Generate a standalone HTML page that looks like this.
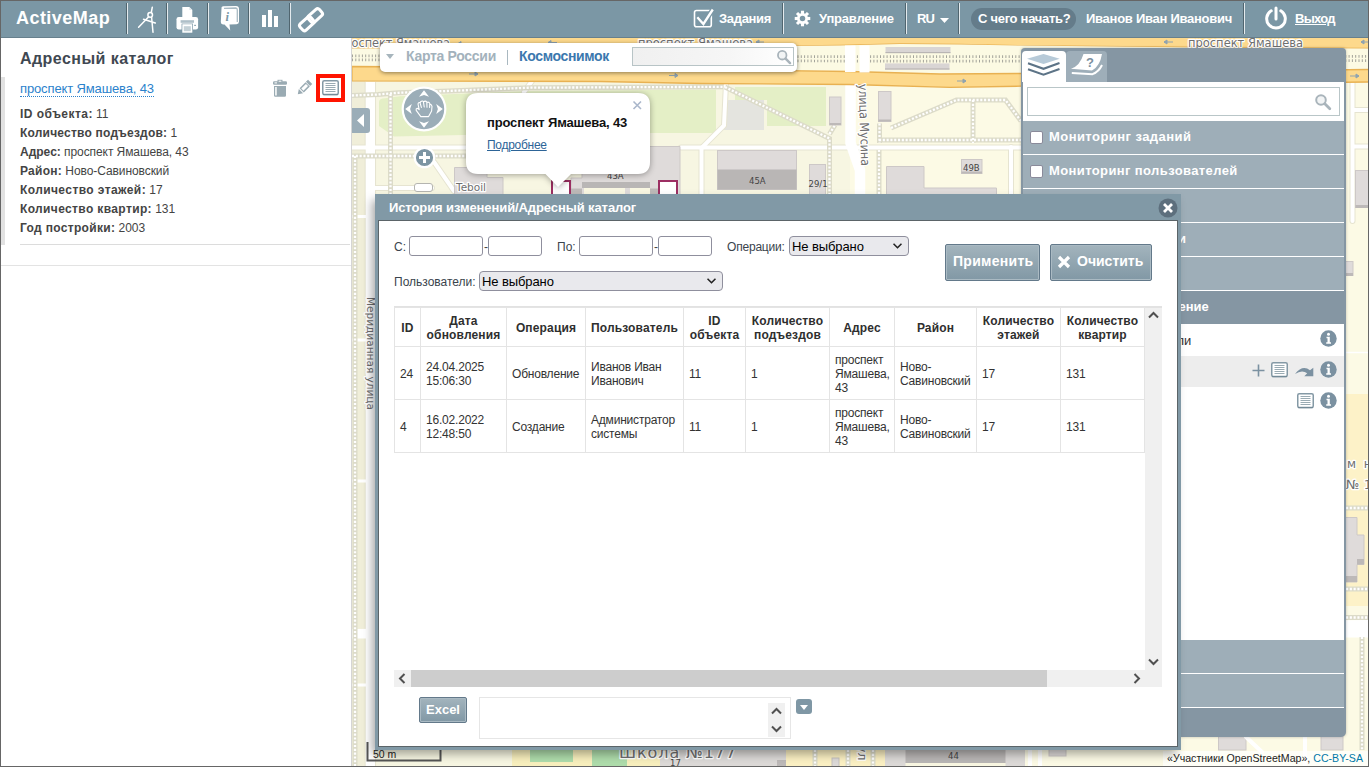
<!DOCTYPE html>
<html lang="ru">
<head>
<meta charset="utf-8">
<title>ActiveMap</title>
<style>
*{box-sizing:border-box;margin:0;padding:0}
html,body{width:1369px;height:767px;overflow:hidden;background:#fff}
body{font-family:"Liberation Sans",sans-serif;font-size:12px;color:#444;position:relative}
.abs{position:absolute}
.t{position:absolute;white-space:nowrap;line-height:1}
.b{font-weight:bold}
#frame{position:absolute;left:0;top:0;width:1369px;height:767px;border:1px solid #666;z-index:100;pointer-events:none}
/* top bar */
#topbar{position:absolute;left:1px;top:1px;width:1367px;height:37px;background:#7b97a5;border-bottom:1px solid #67808d}
#topbar .sep{position:absolute;top:2px;height:31px;width:2px;border-left:1px solid #50656f;border-right:1px solid #e3eaee}
#topbar .t{color:#fff;font-weight:bold;font-size:13px}
/* left panel */
#left{position:absolute;left:1px;top:38px;width:351px;height:728px;background:#fff;border-right:1px solid #d5d5d5}
/* map */
#map{position:absolute;left:352px;top:38px;width:1016px;height:728px;background:#f8f6e2;overflow:hidden}
</style>
<style>
#dlg{position:absolute;left:375px;top:194px;width:806px;height:556px;background:#8199a6;box-shadow:-4px 5px 9px -1px rgba(0,0,0,.34)}
#dlg .inner{position:absolute;left:3px;top:26px;width:800px;height:527px;background:#fff;border:1px solid #5b6468}
#dlg .inp{position:absolute;height:20px;background:#fff;border:1px solid #8f8f9d;border-radius:3px}
#dlg .sel{position:absolute;height:20px;background:#e9e9ed;border:1px solid #8f8f9d;border-radius:4px}
#dlg .sel span{position:absolute;left:2px;top:2px;font-size:13px;color:#000;line-height:15px;white-space:nowrap;letter-spacing:-.1px}
#dlg .btn{position:absolute;border:1px solid #63798a;background:linear-gradient(#a3b4bd,#8198a5);box-shadow:inset 0 0 0 1px #aabac3;border-radius:2px}
#dlg .btn .t{color:#fff;font-weight:bold}
#tbl{position:absolute;left:19px;top:113px;border-collapse:collapse;table-layout:fixed;width:751px;font-size:12px;line-height:14px;color:#333}
#tbl td,#tbl th{border:1px solid #e4e4e4;padding:1px 0 0 5px;vertical-align:middle;text-align:left;overflow:hidden}
#tbl th{text-align:center;padding:1px 0 0 0;height:39px;color:#2f2f2f}
#tbl td{height:53px;letter-spacing:-.2px}
#tbl th{letter-spacing:.15px}
</style>
</head>
<body>
<div id="map"><svg class="abs" style="left:0;top:0" width="1016" height="728" viewBox="352 38 1016 728" font-family="DejaVu Sans, Liberation Sans, sans-serif">
<defs>
<style>
.fw{fill:none;stroke:#dcdbc9;stroke-width:5}
.fd{fill:none;stroke:#fff;stroke-width:2.300;stroke-dasharray:2.100 1.700}
.rc{fill:none;stroke:#e6e4d1;stroke-width:6;stroke-linecap:round;stroke-linejoin:round}
.rw{fill:none;stroke:#fff;stroke-width:4;stroke-linecap:round;stroke-linejoin:round}
.bl{fill:#dfdbda;stroke:#cdc8c7;stroke-width:1}
.bd{fill:#b9b6b5}
.lab{fill:#6f6f6f;stroke:#fff;stroke-width:2.500;paint-order:stroke;stroke-linejoin:round}
.num{fill:#444;font-size:8.500px}
</style>
</defs>
<rect x="352" y="38" width="1016" height="728" fill="#fcfae5"/><rect x="352" y="38" width="498" height="728" fill="#f7f6e2"/>
<!-- left darker strip -->
<rect x="352" y="81" width="13" height="690" fill="#f0eed9"/>
<!-- green areas -->
<path d="M379 102Q379 98.500 385 98.200L400 96.300 449 94.200 530 91 716 89.600V133H560L394 136.500 379 126z" fill="#e4efc6"/>
<path d="M735 87H826V126H767V100H735z" fill="#e4efc6"/>
<rect x="724" y="100" width="40" height="30" fill="#e4e4df"/>
<!-- pale yellow areas -->
<rect x="1346" y="394" width="23" height="212" fill="#fdf2c8"/>
<rect x="512" y="750" width="148" height="17" fill="#f8efbd"/>
<rect x="786" y="750" width="99" height="17" fill="#fbf0c3"/>
<rect x="530" y="750" width="43" height="12" fill="#aedcab"/>
<rect x="592" y="750" width="35" height="17" fill="#aedcab"/>
<!-- minor roads: casing then white -->
<g class="rc">
<path d="M370.300 82V770" stroke-width="11.500" stroke-linecap="butt"/>
<path d="M352 147.500H582M681 147.500H1021"/>
<path d="M375 188H432M434 162L454 191M532 81L524 92"/>
<path d="M726 83L724 125.500 701.500 148V196"/>
<path d="M1011 147V196M1352.500 82V221M1352.500 110H1369M1352.500 146.500H1369"/>
</g>
<g class="rw">
<path d="M370.350 82V770" stroke-width="9.300" stroke-linecap="butt"/>
<path d="M352 147.500H582M681 147.500H1021"/>
<path d="M375 188H432M434 162L454 191M532 81L524 92"/>
<path d="M726 83L724 125.500 701.500 148V196"/>
<path d="M1011 147V196M1352.500 82V221M1352.500 110H1369M1352.500 146.500H1369"/>
<path d="M352 216.500H370M352 340H370M352 481H370M352 685H370" stroke-width="3"/>
</g>
<path d="M1346 352.500H1369" stroke="#fff" stroke-width="1.500" fill="none"/>
<!-- Musina street -->
<path d="M850.500 84V143L860 170V196" fill="none" stroke="#fff" stroke-width="10.500" stroke-linejoin="round"/>
<!-- wide road lower -->
<path d="M352 629L1369 620V637.500L352 638.500z" fill="#fff"/>
<!-- footways -->
<path class="fw" d="M352 95.500L378 94.500 398 92.800 449 90.900 530 87.700 723 86.800M390.500 94V196M352 156H466M355 156V770M725 87L829.500 138.500V196M829.500 134L835 125M879.500 123.500V143M891 128L956.500 100H1005.500L1021 121M973 100V143M879 140H1021M879 150V196M1346 508H1369M1346 589H1369M1346 617.500H1369M1362 637V750M815 750V767M848 750V767M873 750V767"/>
<path class="fd" d="M352 95.500L378 94.500 398 92.800 449 90.900 530 87.700 723 86.800M390.500 94V196M352 156H466M355 156V770M725 87L829.500 138.500V196M829.500 134L835 125M879.500 123.500V143M891 128L956.500 100H1005.500L1021 121M973 100V143M879 140H1021M879 150V196M1346 508H1369M1346 589H1369M1346 617.500H1369M1362 637V750M815 750V767M848 750V767M873 750V767"/>
<!-- main road -->
<path d="M352 30V48.500L500 48.300 700 47 840 45.500 900 44 960 44.500 1020 45.600 1200 47.500 1369 48.500V30z" fill="#fdd98c"/>
<path d="M352 48.500L500 48.300 700 47 840 45.500 900 44 960 44.500 1020 45.600 1200 47.500 1369 48.500" fill="none" stroke="#e8b152" stroke-width="1.300"/>
<path d="M352 48.500L500 48.300 700 47 840 45.500 900 44 960 44.500 1020 45.600 1200 47.500 1369 48.500V69.500L1200 71.500 1020 73.500 940 74 850 71.500 700 69.500 500 67.500 352 66.500z" fill="#fcfae3"/>
<path d="M352 66.500L500 67.500 700 69.500 850 71.500 940 74 1020 73.500 1200 71.500 1369 69.500V82L1200 84 1020 86.200 950 87.300 850 84.500 700 83.500 600 81.500 352 80.800z" fill="#fdd98c" stroke="#e8b152" stroke-width="1.300"/>
<!-- tram ticks -->
<path d="M352 55.800L900 56.700 1369 56.300" stroke="#a3a39a" stroke-width="2.700" stroke-dasharray="1 2.300" fill="none"/>
<path d="M352 59.800L900 61.200 1369 60.700" stroke="#a3a39a" stroke-width="2.700" stroke-dasharray="1 2.300" fill="none"/>
<!-- crossings in median -->
<rect x="845" y="45.500" width="10.500" height="26.500" fill="#fff"/><rect x="859.500" y="45.500" width="10" height="27" fill="#fff"/>
<rect x="885.500" y="47" width="65" height="6" fill="#d9d5d4"/><rect x="885.500" y="52" width="65" height="1.200" fill="#b9b5b4"/>
<rect x="885" y="63.400" width="64.500" height="6" fill="#d9d5d4"/><rect x="885" y="68.400" width="64.500" height="1.200" fill="#b9b5b4"/>
<!-- buildings -->
<path class="bl" d="M454.500 167.500H487V177.500H503V196H454.500z"/>
<path class="bl" d="M582 146.500H680V196H571V178H582z"/>
<rect class="bd" x="582" y="182" width="68" height="6" fill="#c5c1c0"/>
<rect x="584" y="188" width="41" height="8" fill="#f9f7e2"/><rect x="630" y="188" width="20" height="8" fill="#f9f7e2"/>
<rect x="571" y="188.500" width="11" height="7" fill="#bdb9b8"/><rect x="650" y="188.500" width="8" height="7" fill="#bdb9b8"/>
<rect x="552" y="181" width="18" height="16" fill="#fff" stroke="#9c2f63" stroke-width="2"/>
<rect x="659" y="181" width="18" height="16" fill="#fff" stroke="#9c2f63" stroke-width="2"/>
<rect class="bl" x="717.500" y="150.500" width="79" height="39"/><rect class="bd" x="717.500" y="169.500" width="79" height="20"/>
<rect class="bl" x="809.500" y="164.500" width="16" height="32"/>
<rect class="bl" x="829.500" y="97" width="11.500" height="28"/><rect x="829.500" y="123" width="11.500" height="2" fill="#bdb9b8"/>
<rect class="bl" x="878.500" y="91.500" width="12.500" height="30"/><rect x="878.500" y="119.500" width="12.500" height="2" fill="#bdb9b8"/>
<rect class="bl" x="961.500" y="159.500" width="20.500" height="14"/><rect x="961.500" y="171.500" width="20.500" height="2" fill="#bdb9b8"/>
<path class="bl" d="M886.500 166.500H924V188H996.500V196H886.500z"/>
<rect class="bl" x="1355.500" y="170.500" width="16" height="37"/><rect x="1355.500" y="205" width="16" height="3" fill="#bdb9b8"/>
<rect class="bl" x="1344" y="261.500" width="9" height="14"/><rect x="1344" y="273" width="9" height="3" fill="#bdb9b8"/>
<path class="bl" d="M1344 517.500H1357V535H1364V564.500H1357V582H1344z"/><rect x="1346" y="576" width="11" height="6" fill="#bdb9b8"/><rect x="1357" y="559" width="7" height="5.500" fill="#bdb9b8"/>
<!-- bottom strip buildings -->
<rect x="660" y="750" width="126" height="17" fill="#dcd9d7"/><rect x="777" y="760" width="9" height="7" fill="#bdb9b8"/>
<rect x="832" y="758" width="7" height="9" fill="#dcd9d7" stroke="#c5c1c0"/>
<rect x="885" y="750" width="140" height="17" fill="#dcd9d7"/><rect class="bd" x="905.500" y="750" width="100" height="13"/><rect x="905.500" y="763" width="100" height="4" fill="#f9f7e2"/>
<rect class="bl" x="1049" y="745" width="17" height="11"/>
<rect class="bl" x="1218.500" y="730" width="27.500" height="20"/><rect class="bl" x="1321" y="730" width="22" height="20"/>
<path class="rw" d="M1030 750V767M1040 750V767M1246 737L1262 752M1305 737V767"/>
<!-- labels -->
<g font-size="12.500px" class="lab">
<text x="337" y="47" textLength="113" lengthAdjust="spacingAndGlyphs">проспект Ямашева</text>
<text x="638" y="47" textLength="115" lengthAdjust="spacingAndGlyphs">проспект Ямашева</text>
<text x="1188" y="47" textLength="115" lengthAdjust="spacingAndGlyphs">проспект Ямашева</text>
<text font-size="12.500" transform="translate(858.500 84) rotate(88)" textLength="82" lengthAdjust="spacingAndGlyphs">улица Мусина</text>
<text font-size="10.500" transform="translate(367.300 297) rotate(90)" textLength="113" lengthAdjust="spacingAndGlyphs">Меридианная улица</text>
<text font-size="11" x="456" y="191" textLength="30" lengthAdjust="spacingAndGlyphs">Teboil</text>
<text font-size="12" x="1347" y="468" letter-spacing="2">м н</text><text font-size="13" x="1346" y="489">№ 1</text>
<text font-size="16" x="619" y="757.500" textLength="117" lengthAdjust="spacing">Школа №177</text>
<text font-size="12.500" transform="translate(858 745) rotate(90)">ул</text>
</g>
<g class="num"><text x="607" y="178.500">43А</text><text x="749" y="184" font-size="8.500">45А</text><text x="808.500" y="187" font-size="8.500">29/1</text><text x="963" y="171">49В</text><text x="948" y="759">44</text><text x="670" y="766">17</text></g>
<!-- road arrows -->
<g stroke="#8fa3b0" stroke-width="1" fill="#8fa3b0"><path d="M458 43.500h9M458 43.500l3-2v4z"/><path d="M548 42.500h9M548 42.500l3-2v4z"/><path d="M756 42h8M756 42l3-2v4z"/><path d="M1164 42h9M1164 42l3-2v4z"/><path d="M1361 42h8M1361 42l3-2v4z"/><path d="M469 74h9M478 74l-3-2v4z"/><path d="M669 75.500h9M678 75.500l-3-2v4z"/><path d="M957 81h9M966 81l-3-2v4z"/><path d="M1350 76h9M1359 76l-3-2v4z"/></g>
<!-- scale -->
<path d="M367.500 742V760.500H440.500V750" fill="none" stroke="#555" stroke-width="2"/>
<text x="373" y="758" font-size="10.500" fill="#222" font-family="Liberation Sans, sans-serif">50 m</text>
<!-- attribution -->
<rect x="1163" y="751" width="206" height="16" fill="#fff" fill-opacity=".7"/>
<text x="1167" y="762" font-size="11" fill="#222" font-family="Liberation Sans, sans-serif" textLength="196" lengthAdjust="spacingAndGlyphs">«Участники OpenStreetMap», <tspan fill="#0078a8">CC-BY-SA</tspan></text>
</svg>
<!-- base layer switcher -->
<div class="abs" style="left:28px;top:5px;width:417px;height:29px;background:#fff;border-radius:5px;box-shadow:0 1px 4px rgba(0,0,0,.45)"></div>
<svg class="abs" style="left:34px;top:16px" width="8" height="5"><path d="M0 0h8L4 5z" fill="#a7b5bd"/></svg>
<span class="t b" id="m_k1" style="letter-spacing:-.3px;left:54px;top:11px;font-size:14px;color:#a3b2bc">Карта России</span>
<div class="abs" style="left:155px;top:12px;width:1px;height:15px;background:#a9b8c0"></div>
<span class="t b" id="m_k2" style="letter-spacing:-.35px;left:167px;top:11px;font-size:14px;color:#3b78ae">Космоснимок</span>
<div class="abs" style="left:280px;top:9px;width:162px;height:19px;border:1px solid #b8c4c6;background:linear-gradient(90deg,#f0f0f0,#f6f6f6 60%,#fff)"></div>
<svg class="abs" style="left:424px;top:11px" width="16" height="16" viewBox="0 0 18 18"><circle cx="7" cy="7" r="4.800" fill="#f2f4f5" stroke="#a9b4bb" stroke-width="2"/><path d="M10.800 10.800l5 5" stroke="#a9b4bb" stroke-width="2.800" stroke-linecap="round"/></svg>
<!-- collapse button -->
<div class="abs" style="left:0;top:70px;width:18px;height:25px;background:#9badb8;border-radius:0 3px 3px 0"></div>
<svg class="abs" style="left:5px;top:76px" width="7" height="13"><path d="M7 0v13L0 6.500z" fill="#fff"/></svg>
<!-- pan control -->
<svg class="abs" style="left:49.100px;top:48.200px" width="46" height="46" viewBox="-23 -23 46 46"><circle r="21.300" fill="#9badb8" stroke="#fff" stroke-width="2.200"/><g fill="#fff"><path d="M0 -18.800l5 6.600-5-1.700-5 1.700z"/><path d="M0 18.800l5-6.600-5 1.700-5-1.700z"/><path d="M-18.800 0l6.600-5-1.700 5 1.700 5z"/><path d="M18.800 0l-6.600-5 1.700 5-1.700 5z"/></g><path d="M-3.200 7.600L-7.800 1.400Q-8.400 -0.200 -6.800 -0.800L-4.800 0.600 -6 -5Q-5.600 -6.800 -4 -6.400L-2.600 -1.600M-3.900 -6L-3.400 -7.200Q-1.400 -8.600 -0.600 -7.400L0.200 -2M-0.500 -7.200Q1.500 -8.600 2.800 -7L3 -1.800M2.900 -6.600Q5 -7.400 5.800 -5.600L5.600 -1.600M5.800 -5Q7.800 -4.400 8 -2.600L7.600 2 4.600 7.600H-3.200" fill="none" stroke="#fff" stroke-width="1.100" stroke-linejoin="round" stroke-linecap="round"/></svg>
<!-- zoom plus -->
<svg class="abs" style="left:60.500px;top:108.200px" width="23" height="23" viewBox="-11.500 -11.500 23 23"><circle r="9.700" fill="#7d95a3" stroke="#fff" stroke-width="2.200"/><path d="M0 -5.500v11M-5.500 0h11" stroke="#fff" stroke-width="3"/></svg>
<div class="abs" style="left:62px;top:145px;width:19px;height:9px;background:#fff;border:1px solid #b5b5b0;border-radius:3px"></div>
<!-- popup -->
<svg class="abs" style="left:104px;top:45px" width="204" height="112" viewBox="456 83 204 112"><g filter="drop-shadow(0 1px 3px rgba(0,0,0,.35))"><path d="M478 93H638Q650 93 650 105V162Q650 174 638 174H571L558 187 545.500 174H478Q466 174 466 162V105Q466 93 478 93z" fill="#fff"/></g><path d="M633.500 101.500l7.500 7.500M641 101.500l-7.500 7.500" stroke="#aab7cb" stroke-width="1.600"/></svg>
<span class="t b" id="m_pt" style="letter-spacing:-.15px;left:135px;top:78px;font-size:13px;color:#111">проспект Ямашева, 43</span>
<span class="t" id="m_pl" style="letter-spacing:-.28px;left:135px;top:101px;font-size:12px;color:#2d6497;text-decoration:underline">Подробнее</span>
</div>
<div id="left"><div class="abs" style="left:0;top:39px;width:4px;height:168px;background:#e2e2e2"></div>
<span class="t b" id="l_title" style="letter-spacing:.45px;left:19px;top:13px;font-size:16px;color:#3f4852">Адресный каталог</span>
<span class="t" id="l_link" style="letter-spacing:-.13px;left:19px;top:44px;font-size:13px;color:#2b82cc;padding-bottom:1px;border-bottom:1px dotted #2b82cc">проспект Ямашева, 43</span>
<!-- trash -->
<svg class="abs" style="left:271px;top:41px" width="16" height="18" viewBox="0 0 16 18"><g fill="#9aabb3"><path d="M5.500 0.800h5v2h-5z" /><rect x="1" y="2.200" width="14" height="3.600" rx="1.200"/><path d="M2 7h12v9.500a1.300 1.300 0 0 1-1.300 1.300H3.300A1.300 1.300 0 0 1 2 16.500z"/></g><rect x="6.700" y="1.700" width="2.600" height="1" fill="#fff"/><rect x="3.200" y="8" width="1.500" height="8.500" fill="#fff"/><rect x="2.500" y="3.400" width="2.500" height="1" fill="#fff"/></svg>
<!-- pencil -->
<svg class="abs" style="left:295px;top:41px" width="17" height="17" viewBox="0 0 17 17"><g transform="rotate(45 8.500 8.500)"><path d="M5.500 0.500h6v3h-6z" fill="#9aabb3"/><path d="M5.500 4h6v8.500h-6z" fill="#9aabb3"/><path d="M7 5h3v6.500H7z" fill="#fff"/><path d="M5.500 13.500h6l-3 4.500z" fill="#9aabb3"/></g></svg>
<!-- red box + list -->
<div class="abs" style="left:315px;top:36px;width:29px;height:28px;border:4px solid #ff1400"></div>
<svg class="abs" style="left:321px;top:42px" width="17" height="16" viewBox="0 0 17 16"><rect x="0.750" y="0.750" width="15.500" height="13.800" rx="1.500" fill="#fff" stroke="#8499a5" stroke-width="1.500"/><path d="M3.500 3.500h10M3.500 5.500h10M3.500 7.500h10M3.500 9.500h10M3.500 11.500h10" stroke="#9aabb3" stroke-width="1"/><path d="M1 14.700h15" stroke="#6f8794" stroke-width="1"/></svg>
<div id="fields" style="letter-spacing:-.08px">
<span class="t" id="f1" style="left:19px;top:70px"><b style="letter-spacing:0.45px">ID объекта:</b> 11</span>
<span class="t" id="f2" style="left:19px;top:89px"><b style="letter-spacing:0.21px">Количество подъездов:</b> 1</span>
<span class="t" id="f3" style="left:19px;top:108px"><b style="letter-spacing:0.00px">Адрес:</b> проспект Ямашева, 43</span>
<span class="t" id="f4" style="left:19px;top:127px"><b style="letter-spacing:0.27px">Район:</b> Ново-Савиновский</span>
<span class="t" id="f5" style="left:19px;top:146px"><b style="letter-spacing:0.41px">Количество этажей:</b> 17</span>
<span class="t" id="f6" style="left:19px;top:165px"><b style="letter-spacing:0.37px">Количество квартир:</b> 131</span>
<span class="t" id="f7" style="left:19px;top:184px"><b style="letter-spacing:0.33px">Год постройки:</b> 2003</span>
</div>
<div class="abs" style="left:19px;top:206px;width:330px;height:1px;background:#dcdcdc"></div>
<div class="abs" style="left:0;top:227px;width:350px;height:1px;background:#e3e3e3"></div>
</div>
<div id="topbar"><span class="t" id="logo" style="letter-spacing:.45px;left:15px;top:8px;font-size:18px">ActiveMap</span>
<i class="sep" style="left:125px"></i><i class="sep" style="left:165px"></i><i class="sep" style="left:206px"></i><i class="sep" style="left:247px"></i><i class="sep" style="left:288px"></i>
<!-- compass -->
<svg class="abs" style="left:136px;top:4px" width="22" height="30" viewBox="0 0 22 30"><g fill="none" stroke="#fff" stroke-width="1.500" stroke-linecap="round"><circle cx="13.200" cy="9.900" r="2.300"/><path d="M15.300 2.200L14.300 7.500M11.700 11.800L1.600 22.300M14.600 12.200L16 27.300M6.500 14.200L18.300 18"/></g></svg>
<!-- printer -->
<svg class="abs" style="left:175px;top:5px" width="24" height="28" viewBox="0 0 24 28"><g fill="#fff"><path d="M6.300 1h7l3 3v9.500h-10z"/><rect x="0.500" y="11" width="21.600" height="12.500" rx="2.200"/></g><rect x="4.600" y="14.200" width="13.400" height="2.600" fill="#aebfc8"/><rect x="5.600" y="17.600" width="11.400" height="9.600" fill="#7b97a5"/><rect x="6.300" y="18.200" width="10" height="8.500" fill="#fff"/><rect x="7.800" y="20.200" width="7" height="5" fill="#c3d0d6"/><rect x="18.300" y="18.800" width="1.500" height="1.200" fill="#7b97a5"/><path d="M13.300 1v3h3z" fill="#dfe7eb"/></svg>
<!-- info book -->
<svg class="abs" style="left:218px;top:4px" width="22" height="28" viewBox="219 5 22 28"><path d="M221.500 8.500Q221 6.500 223 6.300L236 5.900Q239 6 239 9V21.500Q239 24 236.500 24.200L229.500 24.400 230.200 30.400 224.500 24.500 223 24.500Q220.800 24.300 220.800 22z" fill="#fff"/><path d="M224 8.400L235.800 8Q237.300 8 237.300 10V22" fill="none" stroke="#a9bbc4" stroke-width="1.300"/><text x="227.300" y="21.300" font-family="Liberation Serif,serif" font-style="italic" font-weight="bold" font-size="12.500" fill="#7b97a5" text-anchor="middle">i</text></svg>
<!-- chart -->
<svg class="abs" style="left:260px;top:8px" width="18" height="20" viewBox="0 0 18 20"><g fill="#fff"><rect x="1" y="6" width="4" height="12"/><rect x="7" y="1" width="4" height="17"/><rect x="13" y="7" width="4" height="11"/></g></svg>
<!-- link -->
<svg class="abs" style="left:296px;top:4px" width="30" height="30" viewBox="0 0 30 30"><g fill="none" stroke="#fff" stroke-width="3" stroke-linejoin="round"><rect x="11" y="6.500" width="14.500" height="8.500" rx="2.500" transform="rotate(-42 18.200 10.700)"/><rect x="2.500" y="14.500" width="14.500" height="8.500" rx="2.500" transform="rotate(-42 9.700 18.700)"/></g></svg>
<!-- right side -->
<svg class="abs" style="left:691px;top:5px" width="24" height="24" viewBox="692 6 24 24"><rect x="694.500" y="10.500" width="16.800" height="16.300" rx="2" fill="none" stroke="#fff" stroke-width="1.600"/><path d="M707.500 17.700L713.500 8.500" fill="none" stroke="#7b97a5" stroke-width="5"/><path d="M697.300 17.300L703.400 24 712.800 9.500" fill="none" stroke="#fff" stroke-width="2.300"/></svg>
<span class="t" id="t_zad" style="letter-spacing:-.33px;left:718px;top:11px">Задания</span>
<i class="sep" style="left:781px"></i>
<svg class="abs" style="left:793.400px;top:8.900px" width="17" height="17" viewBox="-9.300 -9.300 18.600 18.600"><g fill="#fff"><circle r="6"/><rect x="-1.700" y="-8.500" width="3.400" height="17"/><rect x="-1.700" y="-8.500" width="3.400" height="17" transform="rotate(45)"/><rect x="-1.700" y="-8.500" width="3.400" height="17" transform="rotate(90)"/><rect x="-1.700" y="-8.500" width="3.400" height="17" transform="rotate(135)"/></g><circle r="3" fill="#7b97a5"/></svg>
<span class="t" id="t_upr" style="letter-spacing:-.2px;left:818px;top:11px">Управление</span>
<i class="sep" style="left:904px"></i>
<span class="t" id="t_ru" style="letter-spacing:-1px;left:916px;top:11px">RU</span>
<svg class="abs" style="left:939px;top:17px" width="9" height="5"><path d="M0 0h9L4.500 5z" fill="#fff"/></svg>
<i class="sep" style="left:957px"></i>
<div class="abs" style="left:970px;top:7px;width:105px;height:22px;border-radius:11px;background:#647c8a"></div>
<span class="t" id="t_start" style="letter-spacing:-.28px;left:977px;top:11px">С чего начать?</span>
<span class="t" id="t_user" style="letter-spacing:-.27px;left:1085px;top:11px">Иванов Иван Иванович</span>
<i class="sep" style="left:1242px"></i>
<svg class="abs" style="left:1263px;top:5px" width="24" height="26" viewBox="0 0 24 26"><path d="M7.200 4.800A9.300 9.300 0 1 0 16.800 4.800" fill="none" stroke="#fff" stroke-width="3" stroke-linecap="round"/><path d="M12 2v11" stroke="#fff" stroke-width="3" stroke-linecap="round"/></svg>
<span class="t" id="t_exit" style="letter-spacing:-.7px;left:1294px;top:11px;text-decoration:underline">Выход</span>
</div>
<div id="layers" class="abs" style="left:1021px;top:48px;width:325px;height:689px;background:#8596a3;border-radius:4px 4px 5px 0;overflow:hidden;box-shadow:0 0 3px rgba(0,0,0,.25)">
  <!-- tabs -->
  <div class="abs" style="left:1.300px;top:3px;width:43.700px;height:31px;background:#fff;border-radius:4px 4px 0 0"></div>
  <div class="abs" style="left:45.100px;top:3px;width:40.800px;height:31px;background:#9eaeb9;border-radius:4px 4px 0 0"></div>
  <svg class="abs" style="left:5px;top:5px" width="36" height="28" viewBox="1026 53 36 28"><path d="M1043.500 54L1059.700 58.700 1043.500 64 1027 58.700z" fill="#b7cad8"/><path d="M1028 63.300L1043.500 68.800 1059.500 63" fill="none" stroke="#5d7487" stroke-width="2.100"/><path d="M1028 69.300L1043.500 74.700 1059.500 69" fill="none" stroke="#5d7487" stroke-width="2.100"/></svg>
  <svg class="abs" style="left:48px;top:5px" width="36" height="28" viewBox="1069 53 36 28"><path d="M1083.500 54H1102Q1100 66 1092 70.600L1071 68.700Q1080 66 1083.500 54z" fill="#fff"/><path d="M1071.800 73L1092.500 74.200Q1099 71.500 1102 65" fill="none" stroke="#fff" stroke-width="2"/><text x="1090" y="67" font-family="Liberation Sans,sans-serif" font-weight="bold" font-size="13" fill="#7a8fa0" text-anchor="middle">?</text></svg>
  <!-- search -->
  <div class="abs" style="left:2px;top:34px;width:321px;height:39px;background:#fff"></div>
  <div class="abs" style="left:6px;top:39px;width:313px;height:29px;border:1px solid #b9c6c8;background:#fff"></div>
  <svg class="abs" style="left:293px;top:45px" width="18" height="18" viewBox="0 0 18 18"><circle cx="7" cy="7" r="4.800" fill="#f2f4f5" stroke="#a9b4bb" stroke-width="2"/><path d="M10.800 10.800l5 5" stroke="#a9b4bb" stroke-width="2.800" stroke-linecap="round"/></svg>
  <!-- items -->
  <div class="abs" style="left:2px;top:73px;width:321px;height:170px;background:#9eaeb8"></div>
  <div class="abs" style="left:2px;top:106px;width:321px;height:1px;background:#fff"></div>
  <div class="abs" style="left:2px;top:140px;width:321px;height:1px;background:#fff"></div>
  <div class="abs" style="left:2px;top:174px;width:321px;height:1px;background:#fff"></div>
  <div class="abs" style="left:2px;top:208px;width:321px;height:1px;background:#fff"></div>
  <div class="abs" style="left:2px;top:242px;width:321px;height:1px;background:#fff"></div>
  <div class="abs" style="left:9px;top:83px;width:13px;height:13px;background:#fff;border:1px solid #8a8a9a;border-radius:2px"></div>
  <div class="abs" style="left:9px;top:117px;width:13px;height:13px;background:#fff;border:1px solid #8a8a9a;border-radius:2px"></div>
  <span class="t b" id="ly1" style="letter-spacing:.44px;left:28px;top:82px;font-size:13px;color:#fff">Мониторинг заданий</span>
  <span class="t b" id="ly2" style="letter-spacing:.39px;left:28px;top:116px;font-size:13px;color:#fff">Мониторинг пользователей</span>
  <span class="t b" id="ly2b" style="right:159.500px;top:184px;font-size:13px;color:#fff;letter-spacing:.4px">Оперативные слои</span>
  <span class="t b" id="ly3" style="left:101px;top:252px;font-size:13px;color:#fff">Отображение</span>
  <!-- white list -->
  <div class="abs" style="left:2px;top:276px;width:321px;height:316px;background:#fff"></div>
  <div class="abs" style="left:2px;top:308px;width:321px;height:31px;background:#ededed"></div>
  <span class="t" id="ly4" style="left:90px;top:286px;font-size:13px;color:#333">Слои модели</span>
  <!-- info icons -->
  <svg class="abs" style="left:298.500px;top:282.300px" width="17" height="17" viewBox="0 0 17 17"><circle cx="8.500" cy="8.500" r="8.200" fill="#7b91a1"/><circle cx="8.500" cy="4.300" r="1.500" fill="#fff"/><path d="M6.500 6.800h3.300v5.500h1.200v1.400h-4.800v-1.400h1.300v-4.100h-1z" fill="#fff"/></svg>
  <svg class="abs" style="left:298.500px;top:313.300px" width="17" height="17" viewBox="0 0 17 17"><circle cx="8.500" cy="8.500" r="8.200" fill="#7b91a1"/><circle cx="8.500" cy="4.300" r="1.500" fill="#fff"/><path d="M6.500 6.800h3.300v5.500h1.200v1.400h-4.800v-1.400h1.300v-4.100h-1z" fill="#fff"/></svg>
  <svg class="abs" style="left:298.500px;top:344.200px" width="17" height="17" viewBox="0 0 17 17"><circle cx="8.500" cy="8.500" r="8.200" fill="#7b91a1"/><circle cx="8.500" cy="4.300" r="1.500" fill="#fff"/><path d="M6.500 6.800h3.300v5.500h1.200v1.400h-4.800v-1.400h1.300v-4.100h-1z" fill="#fff"/></svg>
  <!-- plus -->
  <svg class="abs" style="left:231.300px;top:316.300px" width="13" height="13" viewBox="0 0 13 13"><path d="M6.500 0.500v12M0.500 6.500h12" stroke="#7b91a1" stroke-width="1.600"/></svg>
  <!-- list icons -->
  <svg class="abs" style="left:250px;top:314px" width="17" height="16" viewBox="0 0 17 16"><rect x="0.750" y="0.750" width="15.500" height="13.800" rx="1.500" fill="#fff" stroke="#8499a5" stroke-width="1.500"/><path d="M3.500 3.500h10M3.500 5.500h10M3.500 7.500h10M3.500 9.500h10M3.500 11.500h10" stroke="#9aabb3" stroke-width="1"/><path d="M1 14.700h15" stroke="#6f8794" stroke-width="1"/></svg>
  <svg class="abs" style="left:276.200px;top:345px" width="17" height="16" viewBox="0 0 17 16"><rect x="0.750" y="0.750" width="15.500" height="13.800" rx="1.500" fill="#fff" stroke="#8499a5" stroke-width="1.500"/><path d="M3.500 3.500h10M3.500 5.500h10M3.500 7.500h10M3.500 9.500h10M3.500 11.500h10" stroke="#9aabb3" stroke-width="1"/><path d="M1 14.700h15" stroke="#6f8794" stroke-width="1"/></svg>
  <!-- arrow -->
  <svg class="abs" style="left:273px;top:318px" width="21" height="12" viewBox="0 0 21 12"><path d="M1 8Q8.500 -1.500 16 4.200L19.300 1.800V10.300H10.300L13.200 7.300Q8 3.300 1 8z" fill="#7b91a1"/></svg>
  <!-- bottom -->
  <div class="abs" style="left:2px;top:592px;width:321px;height:67px;background:#9eaeb8"></div>
  <div class="abs" style="left:2px;top:625px;width:321px;height:1px;background:#fff"></div>
  <div class="abs" style="left:2px;top:659px;width:321px;height:1px;background:#fff"></div>
</div>


<div id="dlg">
 <span class="t b" id="d_title" style="letter-spacing:-.1px;left:14px;top:7px;font-size:13px;color:#fff">История изменений/Адресный каталог</span>
 <svg class="abs" style="left:783px;top:4px" width="20" height="20" viewBox="0 0 20 20"><circle cx="10" cy="10" r="9.500" fill="#5d6f7d"/><path d="M6 6l8 8M14 6l-8 8" stroke="#fff" stroke-width="2.800"/></svg>
 <div class="inner"></div>
 <span class="t" id="d_s" style="color:#3a444d;left:19px;top:47px">С:</span>
 <div class="inp" style="left:34px;top:42px;width:74px"></div>
 <span class="t" style="left:109px;top:47px">-</span>
 <div class="inp" style="left:113px;top:42px;width:54px"></div>
 <span class="t" id="d_po" style="color:#3a444d;left:182px;top:47px">По:</span>
 <div class="inp" style="left:204px;top:42px;width:74px"></div>
 <span class="t" style="left:279px;top:47px">-</span>
 <div class="inp" style="left:283px;top:42px;width:54px"></div>
 <span class="t" id="d_op" style="letter-spacing:-.2px;left:352px;top:47px;color:#3a444d">Операции:</span>
 <div class="sel" style="left:414px;top:42px;width:120px"><span id="d_sel1">Не выбрано</span><svg class="abs" style="right:6px;top:6px" width="9" height="6"><path d="M0.500 0.700l4 4 4-4" fill="none" stroke="#222" stroke-width="1.600"/></svg></div>
 <div class="btn" style="left:570px;top:50px;width:95px;height:37px"><span class="t" id="d_b1" style="letter-spacing:.29px;left:7px;top:9px;font-size:14px">Применить</span></div>
 <div class="btn" style="left:675px;top:50px;width:102px;height:37px"><svg class="abs" style="left:6px;top:10px" width="14" height="14" viewBox="0 0 14 14"><path d="M2 2l10 10M12 2L2 12" stroke="#fff" stroke-width="3.200"/></svg><span class="t" id="d_b2" style="left:26px;top:9px;font-size:14px">Очистить</span></div>
 <span class="t" id="d_us" style="left:19px;top:82px;color:#3a444d">Пользователи:</span>
 <div class="sel" style="left:104px;top:77px;width:244px"><span id="d_sel2">Не выбрано</span><svg class="abs" style="right:6px;top:6px" width="9" height="6"><path d="M0.500 0.700l4 4 4-4" fill="none" stroke="#222" stroke-width="1.600"/></svg></div>
 <!-- table area -->
 <div class="abs" style="left:19px;top:112px;width:768px;height:2px;background:#e2e2e2"></div>
 <table id="tbl">
  <colgroup><col style="width:26px"><col style="width:86px"><col style="width:79px"><col style="width:98px"><col style="width:62px"><col style="width:84px"><col style="width:65px"><col style="width:82px"><col style="width:84px"><col style="width:84px"></colgroup>
  <tr><th>ID</th><th>Дата<br>обновления</th><th>Операция</th><th>Пользователь</th><th>ID<br>объекта</th><th>Количество<br>подъездов</th><th>Адрес</th><th>Район</th><th>Количество<br>этажей</th><th>Количество<br>квартир</th></tr>
  <tr><td>24</td><td>24.04.2025<br>15:06:30</td><td>Обновление</td><td>Иванов Иван<br>Иванович</td><td>11</td><td>1</td><td>проспект<br>Ямашева,<br>43</td><td>Ново-<br>Савиновский</td><td>17</td><td>131</td></tr>
  <tr><td>4</td><td>16.02.2022<br>12:48:50</td><td>Создание</td><td>Администратор<br>системы</td><td>11</td><td>1</td><td>проспект<br>Ямашева,<br>43</td><td>Ново-<br>Савиновский</td><td>17</td><td>131</td></tr>
 </table>
 <!-- scrollbars -->
 <div class="abs" style="left:770px;top:114px;width:17px;height:362px;background:#f0f0f0"></div>
 <div class="abs" style="left:19px;top:476px;width:768px;height:17px;background:#f0f0f0"></div>
 <div class="abs" style="left:36px;top:476px;width:636px;height:17px;background:#cdcdcd"></div>
 <svg class="abs" style="left:773px;top:117px" width="11" height="8"><path d="M1 6.500l4.500-4.500 4.500 4.500" fill="none" stroke="#505050" stroke-width="2"/></svg>
 <svg class="abs" style="left:773px;top:464px" width="11" height="8"><path d="M1 1.500l4.500 4.500 4.500-4.500" fill="none" stroke="#505050" stroke-width="2"/></svg>
 <svg class="abs" style="left:23px;top:479px" width="8" height="11"><path d="M6.500 1l-4.500 4.500 4.500 4.500" fill="none" stroke="#505050" stroke-width="2"/></svg>
 <svg class="abs" style="left:758px;top:479px" width="8" height="11"><path d="M1.500 1l4.500 4.500-4.500 4.500" fill="none" stroke="#505050" stroke-width="2"/></svg>
 <!-- bottom controls -->
 <div class="btn" style="left:44px;top:503px;width:48px;height:26px"><span class="t" id="d_b3" style="left:6px;top:5px;font-size:13px">Excel</span></div>
 <div class="abs" style="left:104px;top:503px;width:312px;height:42px;border:1px solid #e6e6e6;background:#fff"></div>
 <div class="abs" style="left:393px;top:509px;width:17px;height:34px;background:#f0f0f0"></div>
 <svg class="abs" style="left:396px;top:513px" width="11" height="8"><path d="M1 6.500l4.500-4.500 4.500 4.500" fill="none" stroke="#505050" stroke-width="2"/></svg>
 <svg class="abs" style="left:396px;top:531px" width="11" height="8"><path d="M1 1.500l4.500 4.500 4.500-4.500" fill="none" stroke="#505050" stroke-width="2"/></svg>
 <div class="abs" style="left:421px;top:505px;width:16px;height:15px;border-radius:3px;background:#7f97a5"></div>
 <svg class="abs" style="left:425px;top:511px" width="8" height="5"><path d="M0 0h8L4 5z" fill="#fff"/></svg>
</div>

<div id="frame"></div>
</body>
</html>
